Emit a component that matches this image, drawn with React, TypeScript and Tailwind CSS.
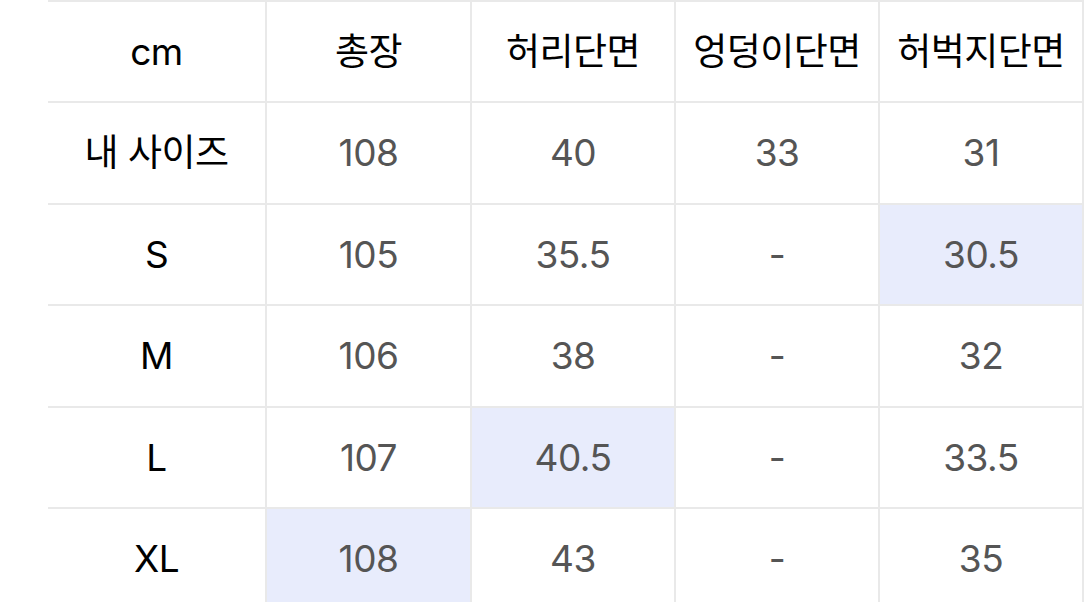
import React from "react";

const header = ["cm", "총장", "허리단면", "엉덩이단면", "허벅지단면"];
const rows: { label: string; values: string[]; hi?: number }[] = [
  { label: "내 사이즈", values: ["108", "40", "33", "31"] },
  { label: "S", values: ["105", "35.5", "-", "30.5"], hi: 3 },
  { label: "M", values: ["106", "38", "-", "32"] },
  { label: "L", values: ["107", "40.5", "-", "33.5"], hi: 1 },
  { label: "XL", values: ["108", "43", "-", "35"], hi: 0 },
];
const heights = ["h-[99px]", "h-[100px]", "h-[99px]", "h-[100px]", "h-[99px]", "h-[100px]"];

export default function App() {
  return (
    <div
      className="w-[1084px] h-[602px] overflow-hidden bg-white pl-[48px]"
      style={{ fontFamily: '"Inter", "Noto Sans CJK KR", sans-serif' }}
    >
      <div className="grid grid-cols-[217px_203px_202px_202px_202px] gap-[2px] bg-[#e9e9e9] pt-[2px] pr-[2px]">
        {header.map((h) => (
          <div
            key={h}
            className={`${heights[0]} bg-white flex items-center justify-center text-[37px] text-black tracking-[-0.5px]`}
          >
            {h}
          </div>
        ))}
        {rows.map((r, ri) => (
          <React.Fragment key={r.label}>
            <div
              className={`${heights[ri + 1]} bg-white flex items-center justify-center text-[37px] text-black tracking-[-0.5px]`}
            >
              {r.label}
            </div>
            {r.values.map((v, vi) => (
              <div
                key={vi}
                className={`${heights[ri + 1]} ${r.hi === vi ? "bg-[#e8ecfc]" : "bg-white"} flex items-center justify-center text-[37px] text-[#555555] tracking-[-0.5px]`}
              >
                {v}
              </div>
            ))}
          </React.Fragment>
        ))}
      </div>
    </div>
  );
}
